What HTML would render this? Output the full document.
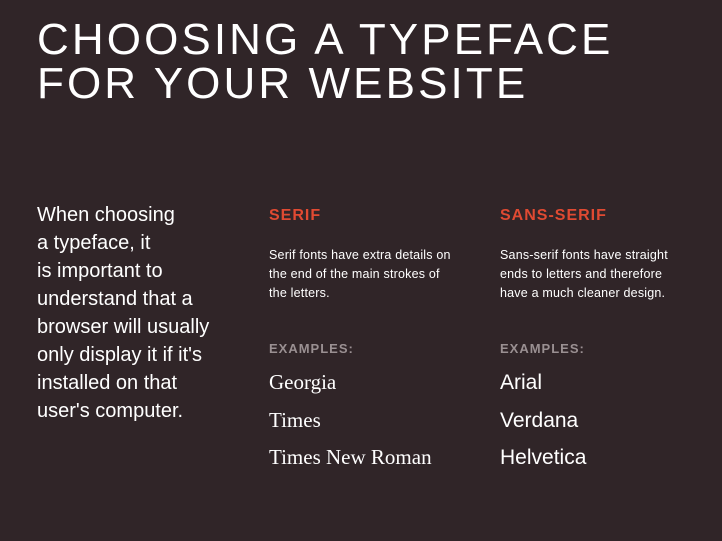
<!DOCTYPE html>
<html><head><style>
body{margin:0;width:722px;height:541px;background:#302528;overflow:hidden;font-family:"Liberation Sans",sans-serif;color:#fff;position:relative}
.a{position:absolute;white-space:nowrap}
h1{position:absolute;left:37px;top:18px;margin:0;font-weight:normal;font-size:44px;line-height:44px;letter-spacing:3.1px}
.p{left:37px;top:201px;font-size:20px;line-height:28px}
.h{font-size:16px;color:#e04a32;letter-spacing:1px;top:207px;font-weight:bold}
.b{font-size:12.5px;line-height:19px;top:246px;letter-spacing:0.2px}
.e{font-size:13px;color:#9a9092;letter-spacing:1px;top:341px;font-weight:bold}
.x{font-size:21px;line-height:37.5px;top:364px}
.s{font-family:"Liberation Serif",serif}
</style></head><body>
<h1>CHOOSING A TYPEFACE<br>FOR YOUR WEBSITE</h1>
<div class="a p">When choosing<br>a typeface, it<br>is important to<br>understand that a<br>browser will usually<br>only display it if it's<br>installed on that<br>user's computer.</div>
<div class="a h" style="left:269px">SERIF</div>
<div class="a h" style="left:500px">SANS-SERIF</div>
<div class="a b" style="left:269px">Serif fonts have extra details on<br>the end of the main strokes of<br>the letters.</div>
<div class="a b" style="left:500px">Sans-serif fonts have straight<br>ends to letters and therefore<br>have a much cleaner design.</div>
<div class="a e" style="left:269px">EXAMPLES:</div>
<div class="a e" style="left:500px">EXAMPLES:</div>
<div class="a x s" style="left:269px">Georgia<br>Times<br>Times New Roman</div>
<div class="a x" style="left:500px">Arial<br>Verdana<br>Helvetica</div>
</body></html>
